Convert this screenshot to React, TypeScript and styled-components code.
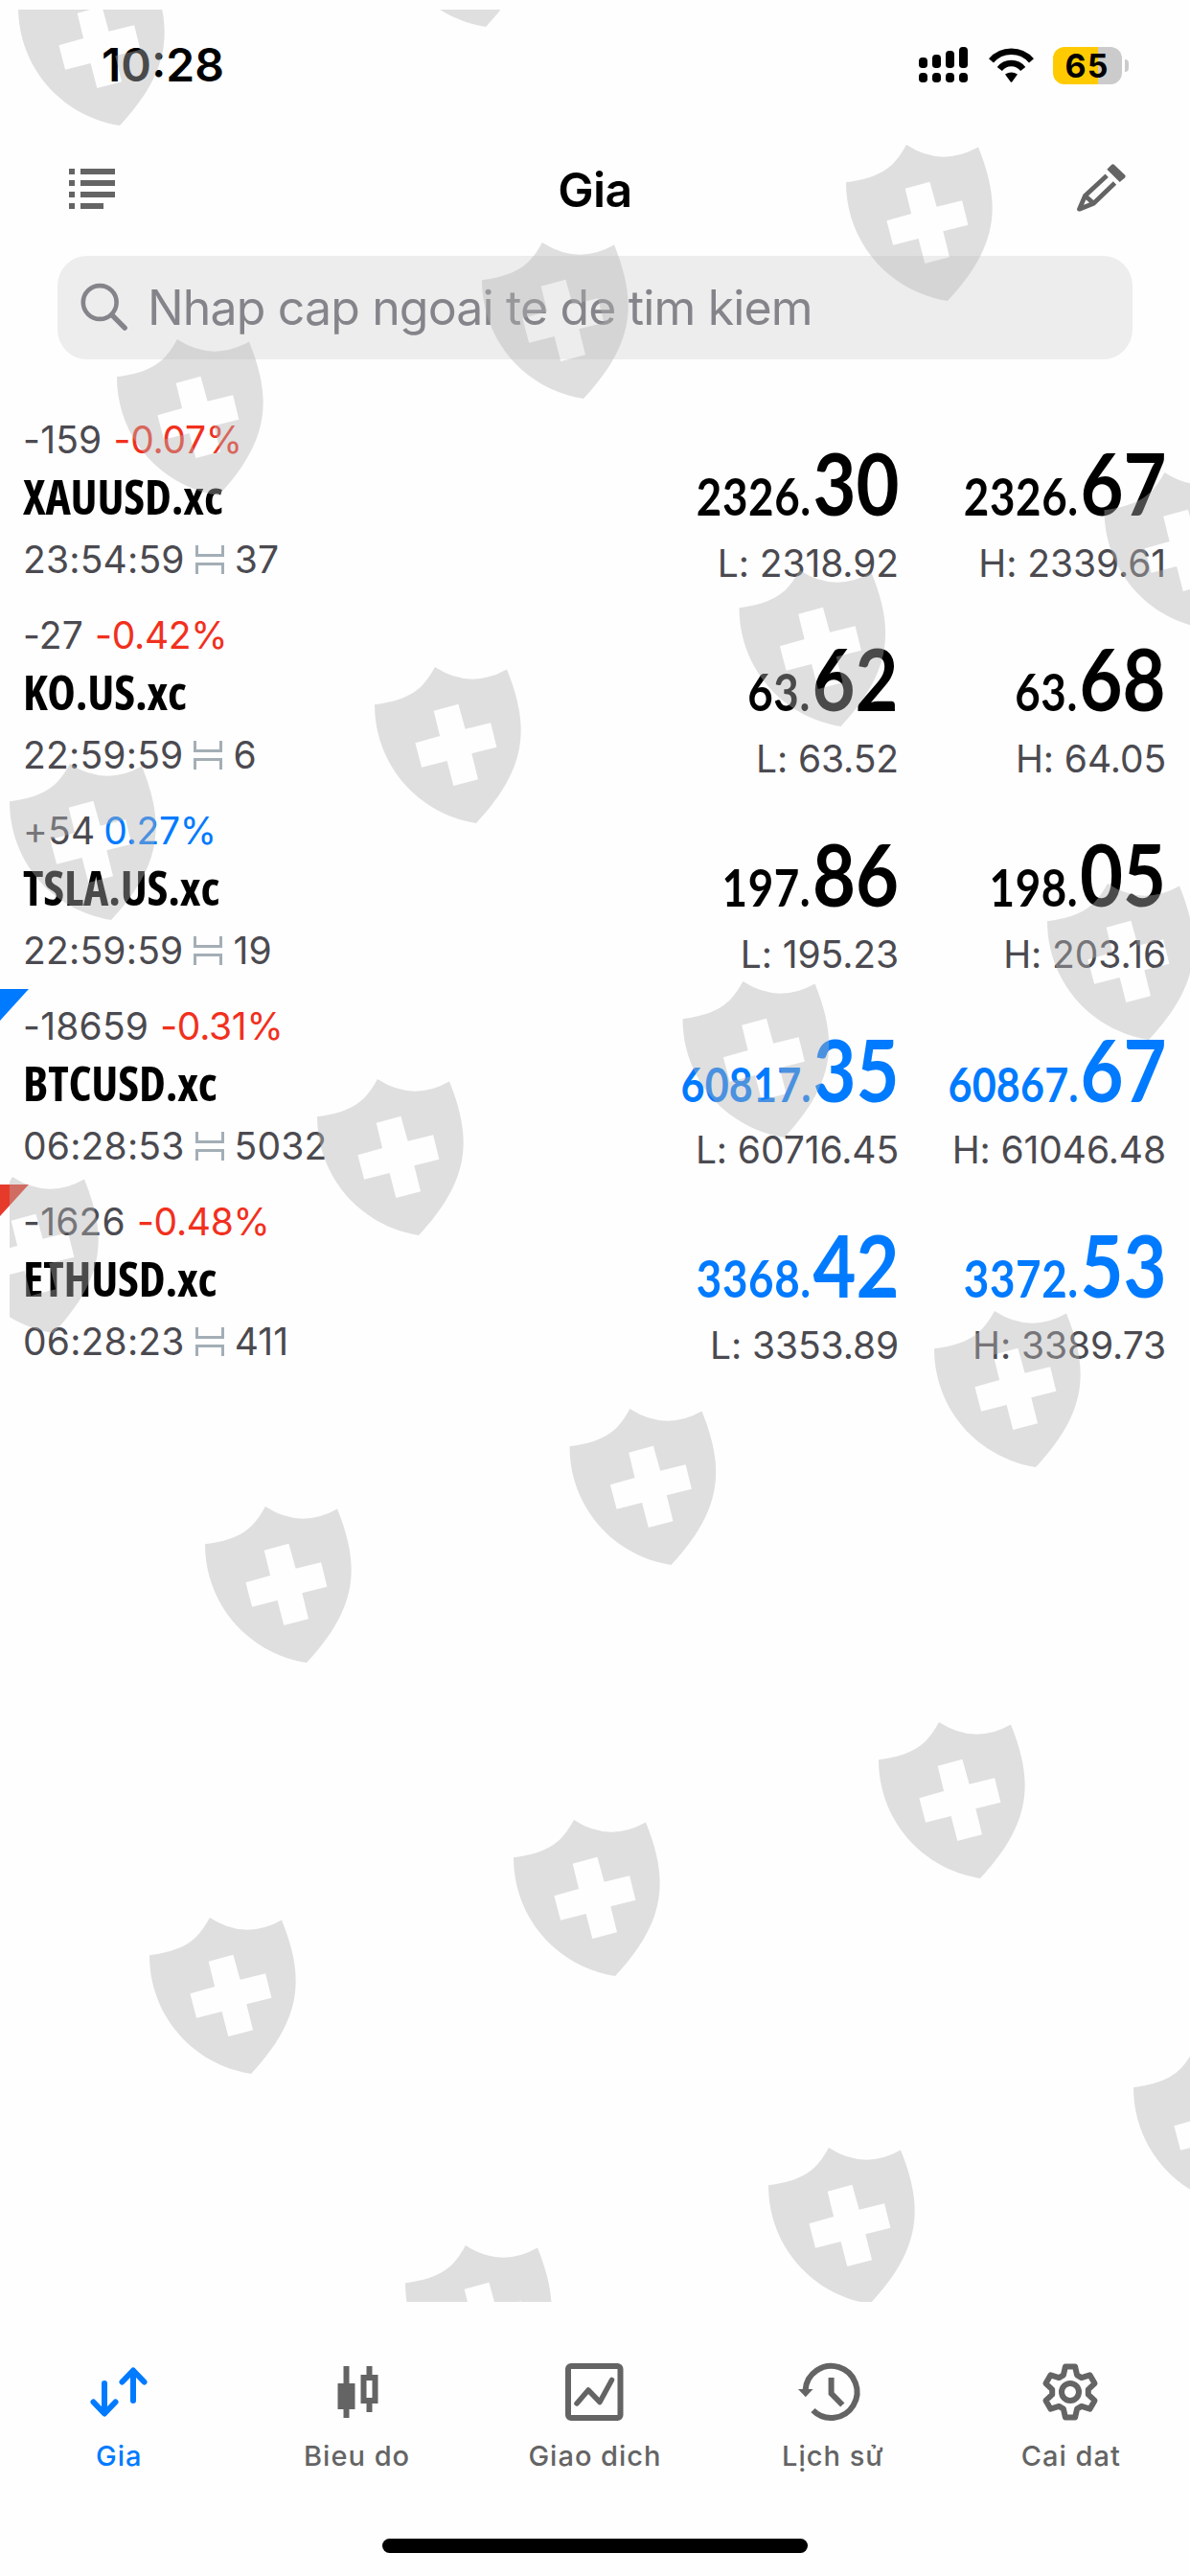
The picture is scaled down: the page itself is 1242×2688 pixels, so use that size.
import React from 'react';
import styled, { createGlobalStyle } from 'styled-components';

const UI_FONT = 'Inter, "Liberation Sans", sans-serif';
const BLUE = '#007aff';
const RED = '#f1301d';
const GREY = '#646464';

const GlobalStyle = createGlobalStyle`
  *, *::before, *::after { box-sizing: border-box; }
  html, body { margin: 0; padding: 0; background: #fefefe; }
  body { font-family: ${UI_FONT}; color: #000; }
  svg { display: block; flex: none; }
`;

const Screen = styled.div`
  position: relative;
  display: flex;
  flex-direction: column;
  width: 1242px;
  height: 2688px;
  overflow: hidden;
  background: #fefefe;
`;

const StatusBar = styled.header`
  display: flex;
  align-items: center;
  justify-content: space-between;
  height: 136px;
  padding: 0 64px 0 106px;
`;

const Clock = styled.time`
  font-size: 48px;
  font-weight: 600;
  line-height: 60px;
`;

const StatusIcons = styled.div`
  display: flex;
  align-items: center;
  gap: 20px;
`;

const Battery = styled.div`
  display: flex;
  align-items: center;
  gap: 3px;
  margin-left: -1px;
`;

const BatteryBody = styled.div<{ $level: number }>`
  display: flex;
  align-items: center;
  justify-content: center;
  width: 72px;
  height: 39px;
  border-radius: 12px;
  background: linear-gradient(90deg, #ffcb00 ${(p) => p.$level}%, #cbcbcb ${(p) => p.$level}%);
  font-size: 34px;
  font-weight: 700;
  line-height: 39px;
  letter-spacing: 1px;
  padding-right: 1px;
`;

const BatteryNub = styled.div`
  width: 4px;
  height: 13px;
  border-radius: 0 4px 4px 0;
  background: #cbcbcb;
`;

const NavBar = styled.nav`
  display: grid;
  grid-template-columns: 1fr auto 1fr;
  align-items: center;
  height: 122px;
  padding: 0 63px 0 72px;
`;

const Title = styled.h1`
  margin: 0 0 0 -9px;
  font-size: 50px;
  font-weight: 600;
  line-height: 62px;
  letter-spacing: -0.6px;
  padding-top: 1px;
`;

const NavAction = styled.div<{ $end?: boolean }>`
  display: flex;
  justify-content: ${(p) => (p.$end ? 'flex-end' : 'flex-start')};
`;

const SearchField = styled.div`
  display: flex;
  align-items: center;
  gap: 18px;
  height: 108px;
  margin: 9px 60px 45px;
  padding: 0 22px;
  border-radius: 31px;
  background: #ededed;
  color: #85848a;
  font-size: 50px;
  line-height: 62px;
  letter-spacing: -0.85px;
`;

const QuoteList = styled.main`
  flex: 1;
`;

const QuoteRow = styled.article`
  position: relative;
  display: grid;
  grid-template-columns: 1fr 278px 279px;
  height: 204px;
  padding: 12px 25px 0 24px;
`;

const Corner = styled.span<{ $color: string }>`
  position: absolute;
  left: 0;
  top: 0;
  width: 30px;
  height: 33px;
  background: ${(p) => p.$color};
  clip-path: polygon(0 0, 100% 0, 0 100%);
`;

const SmallText = styled.div<{ $height: number; $gap: number }>`
  display: flex;
  align-items: center;
  gap: ${(p) => p.$gap}px;
  height: ${(p) => p.$height}px;
  color: #4b4a50;
  font-size: 39px;
  line-height: ${(p) => p.$height}px;
  letter-spacing: 0.2px;
  white-space: nowrap;
`;

const Percent = styled.span<{ $up: boolean }>`
  color: ${(p) => (p.$up ? BLUE : RED)};
  letter-spacing: -0.3px;
`;

const Ticker = styled.div`
  height: 66px;
  font-family: 'Open Sans', 'Noto Sans', sans-serif;
  font-stretch: 75%;
  font-weight: 700;
  font-size: 50px;
  line-height: 66px;
  letter-spacing: -0.2px;
  white-space: nowrap;
`;

const PriceColumn = styled.div`
  display: flex;
  flex-direction: column;
  align-items: flex-end;
`;

const Price = styled.div<{ $color: string; $long: boolean }>`
  display: flex;
  align-items: baseline;
  gap: 2px;
  height: 116px;
  color: ${(p) => p.$color};
  font-family: Lato, 'Open Sans', sans-serif;
  font-weight: 700;
  font-size: ${(p) => (p.$long ? 50 : 53)}px;
  line-height: 142px;
  letter-spacing: ${(p) => (p.$long ? 0.2 : 0.7)}px;
  transform: scaleX(0.862);
  transform-origin: 100% 50%;
`;

const Pips = styled.span`
  font-size: 90px;
  letter-spacing: 0;
`;

const Extreme = styled(SmallText)`
  justify-content: flex-end;
  letter-spacing: -0.1px;
`;

const TabBar = styled.footer`
  display: grid;
  grid-template-columns: repeat(5, 1fr);
  height: 247px;
  padding-top: 58px;
`;

const Tab = styled.div<{ $active?: boolean }>`
  display: flex;
  flex-direction: column;
  align-items: center;
  gap: 13px;
  color: ${(p) => (p.$active ? BLUE : GREY)};
  font-size: 29px;
  font-weight: 500;
  line-height: 36px;
  letter-spacing: 1px;
`;

const HomeIndicator = styled.div`
  width: 444px;
  height: 15px;
  margin: 0 auto 24px;
  border-radius: 8px;
  background: #000;
`;

const WatermarkLayer = styled.svg`
  position: absolute;
  left: 10px;
  top: 10px;
  pointer-events: none;
`;

const SHIELD =
  'M0 39.3C38 34 50.5 23 62.9 0Q100 24 138 2.4C162 62 160 105 106 163C44 153 0 101 0 39.3Z' +
  'M61.7 45.7L68.1 72L42.4 79.3L49.1 104.7L75.6 98L82.3 124L108 117.3L101.3 90.3L127.4 83.7L121.1 58.3L94.6 64.7L87.4 38.7Z';

const SHIELDS: [number, number][] = [
  [19, -32], [401, -135],
  [122, 354], [503, 253], [883, 151],
  [10, 797], [391, 696], [771.5, 595], [1152.5, 493],
  [-50, 1228], [331, 1126], [712.5, 1024], [1093, 922],
  [214, 1572], [594.5, 1470], [975, 1368],
  [156, 2001], [536, 1899], [917, 1797],
  [423, 2343], [802, 2241], [1183, 2139],
];

const Watermark = () => (
  <WatermarkLayer width="1232" height="2392" viewBox="10 10 1232 2392" aria-hidden="true">
    {SHIELDS.map(([x, y]) => (
      <path key={`${x}-${y}`} d={SHIELD} transform={`translate(${x} ${y})`} fill="rgba(180,180,180,0.41)" fillRule="evenodd" />
    ))}
  </WatermarkLayer>
);

const SignalIcon = () => (
  <svg width="51" height="38" viewBox="0 0 51 38">
    {[11, 8, 4, 0].map((top, i) => (
      <React.Fragment key={top}>
        <rect x={i * 14} y={top} width="9" height={22 - top} rx="3.8" />
        <rect x={i * 14} y="27" width="9" height="10" rx="3.8" />
      </React.Fragment>
    ))}
  </svg>
);

const WifiIcon = () => (
  <svg width="50" height="38" viewBox="0 0 50 38">
    <path d="M4.5 14.3A27.8 27.8 0 0 1 46.5 14.3M13.3 23A15.5 15.5 0 0 1 37.7 23" fill="none" stroke="#000" strokeWidth="6.6" />
    <path d="M19 28.6Q25.5 24.2 32 28.6L26.4 36.2Q25.5 37.2 24.6 36.2Z" />
  </svg>
);

const ListIcon = () => (
  <svg width="48" height="42" viewBox="0 0 48 42" fill={GREY}>
    {[0, 12, 24, 36].map((y) => (
      <React.Fragment key={y}>
        <rect x="0" y={y} width="6" height="6" />
        <rect x="12" y={y} width={y === 36 ? 24 : 36} height="6" />
      </React.Fragment>
    ))}
  </svg>
);

const PencilIcon = () => (
  <svg width="58" height="58" viewBox="0 0 58 58" fill="none" stroke={GREY} strokeWidth="4.8" strokeLinejoin="round">
    <path d="M34.2 15.2L11.5 36.3L5.5 50.2L20.4 44.2L42.5 23M11.5 36.3L20.4 44.2" />
    <path d="M34.3 8.7L39 4Q40.5 2.6 42 4L53 14.5Q54.5 16 53 17.5L47.7 22Z" fill={GREY} stroke="none" />
  </svg>
);

const SearchIcon = () => (
  <svg width="54" height="54" viewBox="0 0 54 54" fill="none" stroke="#85848a">
    <circle cx="22.2" cy="21.5" r="17.4" strokeWidth="4.6" />
    <path d="M34.8 34.6L48.2 48.2" strokeWidth="5.4" strokeLinecap="round" />
  </svg>
);

const SpreadIcon = () => (
  <svg width="30" height="30" viewBox="0 0 30 30" fill="none" stroke="#a3aeb6" strokeWidth="3">
    <path d="M1.5 0V10.5H28.5V0M1.5 30V19.5H28.5V30" />
  </svg>
);

const iconBox = { width: 72, height: 72, viewBox: '0 0 72 72' };

const QuotesIcon = () => (
  <svg {...iconBox} fill="none" stroke="currentColor" strokeWidth="6" strokeLinecap="round" strokeLinejoin="round">
    <path d="M21 27V58M9.5 46.5L21 58.5L32.5 46.5M51 45V14M39.5 25.5L51 13.5L62.5 25.5" />
  </svg>
);

const CandlesIcon = () => (
  <svg {...iconBox} fill="currentColor">
    <path d="M21.5 9h6v18h6v27h-6v9h-6v-9h-6V27h6Z" />
    <path fillRule="evenodd" d="M45.5 9h6v9h6v30h-6v9h-6v-9h-6V18h6ZM45.5 24v18h6V24Z" />
  </svg>
);

const TradeIcon = () => (
  <svg {...iconBox} fill="none" stroke="currentColor" strokeWidth="6" strokeLinecap="round" strokeLinejoin="round">
    <rect x="8" y="9" width="54.5" height="54" rx="3" />
    <path d="M17 48L29 34L41 46.5L53.5 23.5" strokeWidth="5.5" />
  </svg>
);

const HistoryIcon = () => (
  <svg {...iconBox} fill="none" stroke="currentColor" strokeWidth="6">
    <path d="M7.6 34A27 27 0 1 1 15.5 55.1" />
    <path d="M34.6 21V37.5L46.3 49.5" />
    <path d="M0 33H15.5L7.8 41.3Z" fill="currentColor" stroke="none" />
  </svg>
);

const gearOutline = Array.from({ length: 6 }, (_, tooth) =>
  [[19, -22], [27, -10.8], [27, 10.8], [19, 22]]
    .map(([radius, offset]) => {
      const angle = ((tooth * 60 + offset) * Math.PI) / 180;
      return `${(35 + radius * Math.sin(angle)).toFixed(2)},${(36 - radius * Math.cos(angle)).toFixed(2)}`;
    })
    .join(' '),
).join(' ');

const SettingsIcon = () => (
  <svg {...iconBox} fill="none" stroke="currentColor" strokeWidth="6" strokeLinejoin="round">
    <polygon points={gearOutline} />
    <circle cx="35" cy="36" r="9" />
  </svg>
);

type Quote = {
  change: string;
  percent: string;
  up: boolean;
  symbol: string;
  time: string;
  spread: string;
  bid: [string, string];
  ask: [string, string];
  low: string;
  high: string;
  color: string;
  corner?: string;
};

const QUOTES: Quote[] = [
  { change: '-159', percent: '-0.07%', up: false, symbol: 'XAUUSD.xc', time: '23:54:59', spread: '37', bid: ['2326.', '30'], ask: ['2326.', '67'], low: '2318.92', high: '2339.61', color: '#000' },
  { change: '-27', percent: '-0.42%', up: false, symbol: 'KO.US.xc', time: '22:59:59', spread: '6', bid: ['63.', '62'], ask: ['63.', '68'], low: '63.52', high: '64.05', color: '#000' },
  { change: '+54', percent: '0.27%', up: true, symbol: 'TSLA.US.xc', time: '22:59:59', spread: '19', bid: ['197.', '86'], ask: ['198.', '05'], low: '195.23', high: '203.16', color: '#000' },
  { change: '-18659', percent: '-0.31%', up: false, symbol: 'BTCUSD.xc', time: '06:28:53', spread: '5032', bid: ['60817.', '35'], ask: ['60867.', '67'], low: '60716.45', high: '61046.48', color: BLUE, corner: BLUE },
  { change: '-1626', percent: '-0.48%', up: false, symbol: 'ETHUSD.xc', time: '06:28:23', spread: '411', bid: ['3368.', '42'], ask: ['3372.', '53'], low: '3353.89', high: '3389.73', color: BLUE, corner: '#e63b2b' },
];

const PriceCell = ({ value, extreme, color }: { value: [string, string]; extreme: string; color: string }) => (
  <PriceColumn>
    <Price $color={color} $long={value[0].length > 5}>
      <span>{value[0]}</span>
      <Pips>{value[1]}</Pips>
    </Price>
    <Extreme $height={79} $gap={0}>{extreme}</Extreme>
  </PriceColumn>
);

const TABS = [
  { label: 'Gia', Icon: QuotesIcon },
  { label: 'Bieu do', Icon: CandlesIcon },
  { label: 'Giao dich', Icon: TradeIcon },
  { label: 'Lịch sử', Icon: HistoryIcon },
  { label: 'Cai dat', Icon: SettingsIcon },
];

export default function App() {
  return (
    <Screen>
      <GlobalStyle />
      <StatusBar>
        <Clock>10:28</Clock>
        <StatusIcons>
          <SignalIcon />
          <WifiIcon />
          <Battery>
            <BatteryBody $level={65}>65</BatteryBody>
            <BatteryNub />
          </Battery>
        </StatusIcons>
      </StatusBar>
      <NavBar>
        <NavAction><ListIcon /></NavAction>
        <Title>Gia</Title>
        <NavAction $end><PencilIcon /></NavAction>
      </NavBar>
      <SearchField>
        <SearchIcon />
        <span>Nhap cap ngoai te de tim kiem</span>
      </SearchField>
      <QuoteList>
        {QUOTES.map((q) => (
          <QuoteRow key={q.symbol}>
            {q.corner && <Corner $color={q.corner} />}
            <div>
              <SmallText $height={53} $gap={q.up ? 9 : 12}>
                <span>{q.change}</span>
                <Percent $up={q.up}>{q.percent}</Percent>
              </SmallText>
              <Ticker>{q.symbol}</Ticker>
              <SmallText $height={66} $gap={11}>
                <span>{q.time}</span>
                <SpreadIcon />
                <span>{q.spread}</span>
              </SmallText>
            </div>
            <PriceCell value={q.bid} extreme={`L: ${q.low}`} color={q.color} />
            <PriceCell value={q.ask} extreme={`H: ${q.high}`} color={q.color} />
          </QuoteRow>
        ))}
      </QuoteList>
      <TabBar>
        {TABS.map(({ label, Icon }, i) => (
          <Tab key={label} $active={i === 0}>
            <Icon />
            <span>{label}</span>
          </Tab>
        ))}
      </TabBar>
      <HomeIndicator />
      <Watermark />
    </Screen>
  );
}
